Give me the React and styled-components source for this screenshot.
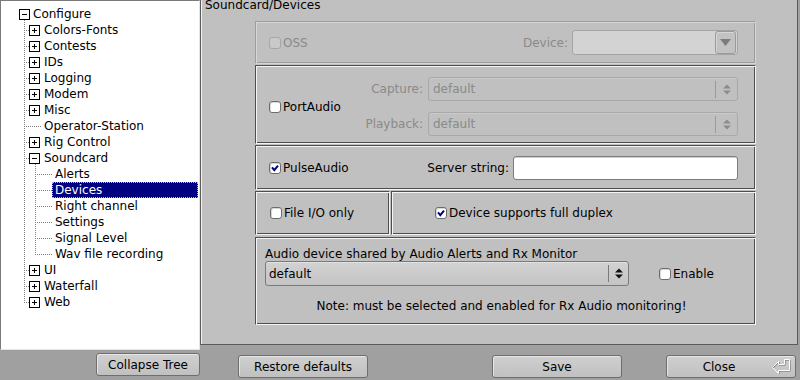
import React from "react";
import styled, { createGlobalStyle } from "styled-components";

const DARK = "#4e4e4e";
const LIGHT = "#f4f4f4";
const FAINT_DARK = "#9c9c9c";
const FAINT_LIGHT = "#d6d6d6";
const GREY_TEXT = "#8a8a8a";

const GlobalStyle = createGlobalStyle`
  html, body {
    margin: 0;
    padding: 0;
  }
  body {
    background: #a0a0a0;
    font-family: "DejaVu Sans", "Liberation Sans", sans-serif;
    font-size: 12px;
    color: #000;
  }
`;

const Window = styled.div`
  width: 800px;
  height: 380px;
  display: flex;
  flex-direction: column;
  overflow: hidden;
  background: #a0a0a0;
`;

const Main = styled.div`
  display: flex;
  align-items: flex-start;
  height: 350px;
`;

/* ---------- tree ---------- */

const TreeBox = styled.div`
  box-sizing: border-box;
  width: 200px;
  height: 350px;
  padding-top: 5px;
  background: #fff;
  border: 1px solid;
  border-color: #7a7a7a #e4e4e4 #e4e4e4 #7a7a7a;
`;

const Row = styled.div`
  display: flex;
  height: 16px;
  padding-left: ${(p) => p.$indent}px;
  padding-right: 1px;
`;

const Branch = styled.div`
  position: relative;

  &::before {
    content: "";
    position: absolute;
    left: ${(p) => p.$x}px;
    top: -2px;
    bottom: 7px;
    border-left: 1px dotted #808080;
  }
`;

const Connector = styled.span`
  position: relative;
  box-sizing: border-box;
  width: 17px;
  height: 16px;
  flex-shrink: 0;
  display: flex;
  justify-content: flex-end;
  align-items: flex-start;
  padding-right: 1px;

  &::before {
    content: "";
    position: absolute;
    left: 0;
    right: ${(p) => (p.$leaf ? 0 : 6)}px;
    top: 8px;
    border-top: 1px dotted #808080;
  }
`;

const ExpanderBox = styled.svg`
  position: relative;
  display: block;
  flex-shrink: 0;
  margin-top: 3px;
`;

const NodeLabel = styled.span`
  box-sizing: border-box;
  flex: 1;
  height: 16px;
  line-height: 14px;
  padding: 0 2px;
  white-space: nowrap;
  border: 1px dotted ${(p) => (p.$selected ? "#b8b8d8" : "transparent")};
  background: ${(p) => (p.$selected ? "#000080" : "transparent")};
  color: ${(p) => (p.$selected ? "#fff" : "#000")};
`;

const Expander = ({ open }) => (
  <ExpanderBox width="11" height="11" viewBox="0 0 11 11" shapeRendering="crispEdges">
    <rect x="0.5" y="0.5" width="10" height="10" fill="#fff" stroke="#000" />
    <line x1="3" y1="5.5" x2="8" y2="5.5" stroke="#000" />
    {!open && <line x1="5.5" y1="3" x2="5.5" y2="8" stroke="#000" />}
  </ExpanderBox>
);

const treeItems = [
  { label: "Colors-Fonts", closed: true },
  { label: "Contests", closed: true },
  { label: "IDs", closed: true },
  { label: "Logging", closed: true },
  { label: "Modem", closed: true },
  { label: "Misc", closed: true },
  { label: "Operator-Station" },
  { label: "Rig Control", closed: true },
  {
    label: "Soundcard",
    children: ["Alerts", "Devices", "Right channel", "Settings", "Signal Level", "Wav file recording"],
  },
  { label: "UI", closed: true },
  { label: "Waterfall", closed: true },
  { label: "Web", closed: true },
];

const ConfigTree = () => (
  <TreeBox>
    <Row $indent={18}>
      <Expander open />
      <NodeLabel>Configure</NodeLabel>
    </Row>
    <Branch $x={23}>
      {treeItems.map((item) => (
        <React.Fragment key={item.label}>
          <Row $indent={23}>
            <Connector $leaf={!item.closed && !item.children}>
              {(item.closed || item.children) && <Expander open={!!item.children} />}
            </Connector>
            <NodeLabel>{item.label}</NodeLabel>
          </Row>
          {item.children && (
            <Branch $x={34}>
              {item.children.map((child) => (
                <Row $indent={34} key={child}>
                  <Connector $leaf />
                  <NodeLabel $selected={child === "Devices"}>{child}</NodeLabel>
                </Row>
              ))}
            </Branch>
          )}
        </React.Fragment>
      ))}
    </Branch>
  </TreeBox>
);

/* ---------- settings panel ---------- */

const Panel = styled.div`
  box-sizing: border-box;
  width: 598px;
  height: 345px;
  background: #c0c0c0;
  border: 1px solid #5a5a5a;
  border-top: none;
  box-shadow: inset 1px 0 ${LIGHT};
`;

const Title = styled.div`
  height: 22px;
  margin: -1px 0 0 4px;
  line-height: 12px;
`;

const Frames = styled.div`
  display: flex;
  flex-direction: column;
  width: 501px;
  margin-left: 54px;
`;

const Frame = styled.div`
  box-sizing: border-box;
  display: flex;
  align-items: ${(p) => p.$align || "center"};
  flex-direction: ${(p) => p.$dir || "row"};
  width: ${(p) => (p.$w ? `${p.$w}px` : "auto")};
  height: ${(p) => p.$h}px;
  margin-top: ${(p) => p.$mt || 0}px;
  padding: ${(p) => p.$pad || "0"};
  border: 1px solid;
  border-color: ${(p) =>
    p.$faint
      ? `${FAINT_DARK} ${FAINT_LIGHT} ${FAINT_LIGHT} ${FAINT_DARK}`
      : `${DARK} ${LIGHT} ${LIGHT} ${DARK}`};
  box-shadow: ${(p) =>
    p.$faint
      ? `inset 1px 1px ${FAINT_LIGHT}, inset -1px -1px ${FAINT_DARK}`
      : `inset 1px 1px ${LIGHT}, inset -1px -1px ${DARK}`};
`;

const FrameRow = styled.div`
  display: flex;
  gap: 1px;
  margin-top: ${(p) => p.$mt || 0}px;
`;

const Spacer = styled.div`
  flex: 1;
`;

const CheckLabel = styled.label`
  display: flex;
  align-items: center;
  gap: 2px;
  white-space: nowrap;
  color: ${(p) => (p.$disabled ? GREY_TEXT : "#000")};
`;

const CheckSquare = styled.span`
  box-sizing: border-box;
  width: 12px;
  height: 12px;
  flex-shrink: 0;
  display: flex;
  align-items: center;
  justify-content: center;
  border-radius: 3px;
  border: 1px solid ${(p) => (p.$disabled ? "#a6a6a6" : "#6c6c6c")};
  background: ${(p) => (p.$disabled ? "#c9c9c9" : "#fff")};
  box-shadow: ${(p) => (p.$disabled ? "none" : "inset 1px 1px #d8d8d8")};
`;

const Check = ({ label, checked, disabled }) => (
  <CheckLabel $disabled={disabled}>
    <CheckSquare $disabled={disabled}>
      {checked && (
        <svg width="10" height="10" viewBox="0 0 10 10">
          <polyline points="2,4.3 4.3,7.2 8,2.6" fill="none" stroke="#000080" strokeWidth="2" />
        </svg>
      )}
    </CheckSquare>
    {label}
  </CheckLabel>
);

const FieldLabel = styled.span`
  white-space: nowrap;
  color: ${(p) => (p.$disabled ? GREY_TEXT : "#000")};
  margin-right: ${(p) => p.$gap ?? 4}px;
`;

const FieldGrid = styled.div`
  display: grid;
  grid-template-columns: auto 310px;
  column-gap: 5px;
  row-gap: 11px;
  align-items: center;
  justify-items: end;
  margin-left: auto;
`;

const TextInput = styled.div`
  box-sizing: border-box;
  width: ${(p) => p.$w}px;
  height: 24px;
  border: 1px solid #7c7c7c;
  border-radius: 3px;
  background: #fff;
  box-shadow: inset 0 1px #d0d0d0;
`;

const SpinBox = styled.div`
  box-sizing: border-box;
  display: flex;
  align-items: center;
  width: ${(p) => p.$w}px;
  height: ${(p) => p.$h || 24}px;
  border: 1px solid ${(p) => (p.$disabled ? "#a8a8a8" : "#7a7a7a")};
  border-radius: 3px;
  background: ${(p) =>
    p.$disabled ? "#c0c0c0" : "linear-gradient(#d2d2d2, #c4c4c4)"};
  box-shadow: inset 0 1px ${(p) => (p.$disabled ? "#cbcbcb" : "#e2e2e2")};
  color: ${(p) => (p.$disabled ? GREY_TEXT : "#000")};
`;

const SpinText = styled.span`
  flex: 1;
  padding-left: ${(p) => p.$pad || 3}px;
`;

const SpinArrows = styled.span`
  box-sizing: border-box;
  display: flex;
  align-items: center;
  justify-content: center;
  width: ${(p) => p.$w}px;
  height: 17px;
  border-left: 1px solid ${(p) => (p.$disabled ? "#9a9a9a" : "#7a7a7a")};
`;

const UpDown = ({ color }) => (
  <svg width="8" height="11" viewBox="0 0 8 11">
    <polygon points="0,4.5 4,0.5 8,4.5" fill={color} />
    <polygon points="0,6.5 8,6.5 4,10.5" fill={color} />
  </svg>
);

const Spin = ({ w, disabled, arrowW, pad, children }) => (
  <SpinBox $w={w} $disabled={disabled}>
    <SpinText $pad={pad}>{children}</SpinText>
    <SpinArrows $w={arrowW} $disabled={disabled}>
      <UpDown color={disabled ? "#8c8c8c" : "#111"} />
    </SpinArrows>
  </SpinBox>
);

const DropBox = styled.div`
  box-sizing: border-box;
  display: flex;
  justify-content: flex-end;
  align-items: center;
  width: 166px;
  height: 25px;
  padding-right: 1px;
  border: 1px solid #a4a4a4;
  border-radius: 3px;
  background: #d3d3d3;
`;

const DropButton = styled.span`
  box-sizing: border-box;
  display: flex;
  align-items: center;
  justify-content: center;
  width: 21px;
  height: 23px;
  border: 1px solid #9a9a9a;
  border-radius: 3px;
  background: #c2c2c2;
  box-shadow: inset 1px 1px #d6d6d6;
`;

const AudioLine = styled.div`
  line-height: 14px;
`;

const AudioControls = styled.div`
  display: flex;
  align-items: center;
  gap: 30px;
`;

const Note = styled.div`
  margin-top: 13px;
  padding-right: 17px;
  line-height: 14px;
  text-align: center;
`;

/* ---------- bottom buttons ---------- */

const ButtonBar = styled.div`
  display: flex;
  align-items: flex-start;
  height: 30px;
`;

const Button = styled.button`
  box-sizing: border-box;
  display: flex;
  align-items: center;
  width: ${(p) => p.$w}px;
  height: 23px;
  margin-left: ${(p) => p.$ml}px;
  margin-top: ${(p) => p.$mt}px;
  padding: 0;
  border: 1px solid #6e6e6e;
  border-radius: 3px;
  background: linear-gradient(#d0d0d0, #c0c0c0);
  box-shadow: inset 1px 1px #e6e6e6;
  font: inherit;
  color: #000;
`;

const ButtonText = styled.span`
  flex: 1;
  text-align: center;
`;

const ReturnIcon = styled.svg`
  margin-right: 4px;
  flex-shrink: 0;
`;

const RETURN_PATH =
  "M1.5 9.5 L7.5 3.5 L7.5 6.5 L13.5 6.5 L13.5 1.5 L18.5 1.5 L18.5 12.5 L7.5 12.5 L7.5 15.5 Z";

export default function App() {
  return (
    <>
      <GlobalStyle />
      <Window>
        <Main>
          <ConfigTree />
          <Panel>
            <Title>Soundcard/Devices</Title>
            <Frames>
              <Frame $h={43} $faint $pad="0 17px 0 13px">
                <Check label="OSS" disabled />
                <Spacer />
                <FieldLabel $disabled>Device:</FieldLabel>
                <DropBox>
                  <DropButton>
                    <svg width="11" height="7" viewBox="0 0 11 7">
                      <polygon points="0,0 11,0 5.5,7" fill="#7c7c7c" />
                    </svg>
                  </DropButton>
                </DropBox>
              </Frame>

              <Frame $h={79} $mt={1} $pad="11px 17px 7px 13px">
                <Check label="PortAudio" />
                <FieldGrid>
                  <FieldLabel $disabled $gap={0}>Capture:</FieldLabel>
                  <Spin w={310} disabled arrowW={22} pad={4}>default</Spin>
                  <FieldLabel $disabled $gap={0}>Playback:</FieldLabel>
                  <Spin w={310} disabled arrowW={22} pad={4}>default</Spin>
                </FieldGrid>
              </Frame>

              <Frame $h={45} $mt={1} $pad="0 17px 0 13px">
                <Check label="PulseAudio" checked />
                <Spacer />
                <FieldLabel>Server string:</FieldLabel>
                <TextInput $w={225} />
              </Frame>

              <FrameRow $mt={1}>
                <Frame $w={135} $h={44} $pad="0 0 0 14px">
                  <Check label="File I/O only" />
                </Frame>
                <Frame $w={365} $h={44} $pad="0 0 0 43px">
                  <Check label="Device supports full duplex" checked />
                </Frame>
              </FrameRow>

              <Frame $h={88} $mt={2} $dir="column" $align="stretch" $pad="9px 0 0 9px">
                <AudioLine>Audio device shared by Audio Alerts and Rx Monitor</AudioLine>
                <AudioControls>
                  <SpinBox $w={364} $h={25}>
                    <SpinText $pad={3}>default</SpinText>
                    <SpinArrows $w={20}>
                      <UpDown color="#111" />
                    </SpinArrows>
                  </SpinBox>
                  <Check label="Enable" />
                </AudioControls>
                <Note>Note: must be selected and enabled for Rx Audio monitoring!</Note>
              </Frame>
            </Frames>
          </Panel>
        </Main>

        <ButtonBar>
          <Button $w={104} $ml={96} $mt={3}>
            <ButtonText>Collapse Tree</ButtonText>
          </Button>
          <Button $w={130} $ml={38} $mt={5}>
            <ButtonText>Restore defaults</ButtonText>
          </Button>
          <Button $w={130} $ml={124} $mt={5}>
            <ButtonText>Save</ButtonText>
          </Button>
          <Button $w={130} $ml={44} $mt={5}>
            <ButtonText>Close</ButtonText>
            <ReturnIcon width="20" height="17" viewBox="0 0 20 17">
              <path d={RETURN_PATH} fill="none" stroke="#7a7a7a" transform="translate(0.6 0.6)" />
              <path d={RETURN_PATH} fill="none" stroke="#fff" />
            </ReturnIcon>
          </Button>
        </ButtonBar>
      </Window>
    </>
  );
}
